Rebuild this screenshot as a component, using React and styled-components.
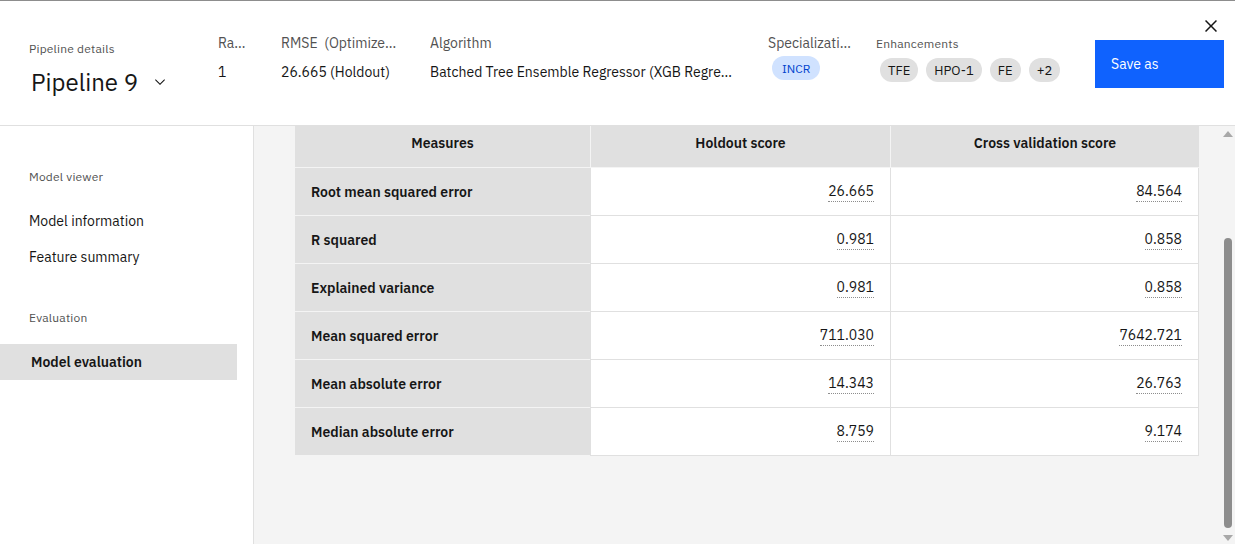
import React from "react";
import styled, { createGlobalStyle } from "styled-components";

const GlobalStyle = createGlobalStyle`
  html, body {
    margin: 0;
    padding: 0;
    background: #ffffff;
  }
  body {
    font-family: "IBM Plex Sans", Roboto, "Liberation Sans", sans-serif;
    color: #161616;
  }
  * { box-sizing: border-box; }
`;

const Page = styled.div`
  width: 1235px;
  height: 544px;
  display: flex;
  flex-direction: column;
  border-top: 1px solid #8d8d8d;
  overflow: hidden;
  position: relative;
`;

const Header = styled.header`
  height: 125px;
  flex-shrink: 0;
  display: flex;
  align-items: flex-start;
  padding-top: 33px;
  border-bottom: 1px solid #e0e0e0;
`;

const TitleBlock = styled.div`
  width: 189px;
  margin-left: 29px;
  margin-top: 7px;
  display: flex;
  flex-direction: column;
`;

const SmallLabel = styled.div`
  font-size: 12px;
  line-height: 16px;
  color: #525252;
  letter-spacing: 0.2px;
`;

const TitleRow = styled.div`
  display: flex;
  align-items: center;
  margin-top: 9px;
  font-size: 24px;
  line-height: 32px;
  color: #161616;
  gap: 14px;
  padding-left: 2px;
`;

const MetaColumn = styled.div`
  width: ${(p) => p.$w}px;
  display: flex;
  flex-direction: column;
  gap: 11px;
`;

const MetaLabel = styled.div`
  font-size: 14px;
  line-height: 18px;
  color: #525252;
  white-space: nowrap;
  overflow: hidden;
  text-overflow: ellipsis;
  max-width: ${(p) => p.$max}px;
`;

const MetaValue = styled.div`
  font-size: 14px;
  line-height: 18px;
  color: #161616;
  white-space: nowrap;
  overflow: hidden;
  text-overflow: ellipsis;
  max-width: ${(p) => p.$max}px;
`;

const Dotted = styled.span`
  border-bottom: 1px dotted #8d8d8d;
  padding-bottom: 1px;
`;

const TagColumn = styled.div`
  width: ${(p) => p.$w}px;
  display: flex;
  flex-direction: column;
  gap: ${(p) => p.$gap}px;
`;

const TagRow = styled.div`
  display: flex;
  gap: 8px;
  padding-left: 4px;
`;

const Tag = styled.span`
  height: 24px;
  border-radius: 12px;
  padding: 0 ${(p) => (p.$blue ? 10 : 8)}px;
  display: inline-flex;
  align-items: center;
  font-size: ${(p) => (p.$blue ? 12 : 13)}px;
  background: ${(p) => (p.$blue ? "#d0e2ff" : "#e0e0e0")};
  color: ${(p) => (p.$blue ? "#0043ce" : "#161616")};
`;

const SaveButton = styled.button`
  margin-top: 6px;
  width: 129px;
  height: 48px;
  background: #0f62fe;
  color: #ffffff;
  border: none;
  font-family: inherit;
  font-size: 14px;
  text-align: left;
  padding: 0 16px 1px;
`;

const CloseButton = styled.button`
  position: absolute;
  top: 13px;
  right: 12px;
  width: 24px;
  height: 24px;
  padding: 0;
  border: none;
  background: transparent;
  display: flex;
  align-items: center;
  justify-content: center;
`;

const Body = styled.div`
  flex: 1;
  display: flex;
  min-height: 0;
`;

const SideNav = styled.nav`
  width: 254px;
  flex-shrink: 0;
  border-right: 1px solid #e0e0e0;
  padding-top: 43px;
  display: flex;
  flex-direction: column;
`;

const NavSection = styled.div`
  display: flex;
  flex-direction: column;
  margin-bottom: 35px;
`;

const NavHeading = styled(SmallLabel)`
  padding-left: 29px;
  margin-bottom: 18px;
`;

const NavItem = styled.div`
  width: 237px;
  height: 36px;
  display: flex;
  align-items: center;
  padding-left: ${(p) => (p.$active ? 31 : 29)}px;
  font-size: 14px;
  font-weight: ${(p) => (p.$active ? 600 : 400)};
  background: ${(p) => (p.$active ? "#e0e0e0" : "transparent")};
  color: #161616;
`;

const Content = styled.main`
  flex: 1;
  background: #f4f4f4;
  padding-left: 41px;
`;

const Table = styled.div`
  width: 904px;
  display: grid;
  grid-template-columns: 295px 300px 309px;
`;

const HeadCell = styled.div`
  height: 42px;
  background: #e0e0e0;
  border-bottom: 1px solid #f4f4f4;
  border-left: ${(p) => (p.$first ? "none" : "1px solid #f4f4f4")};
  display: flex;
  align-items: center;
  justify-content: center;
  padding-bottom: 8px;
  font-size: 14px;
  font-weight: 600;
`;

const MeasureCell = styled.div`
  height: 48px;
  background: #e0e0e0;
  border-bottom: 1px solid #f4f4f4;
  display: flex;
  align-items: center;
  padding-left: 16px;
  font-size: 14px;
  font-weight: 600;
`;

const ValueCell = styled.div`
  height: 48px;
  background: #ffffff;
  border-bottom: 1px solid #e0e0e0;
  border-left: 1px solid #e0e0e0;
  border-right: ${(p) => (p.$last ? "1px solid #e0e0e0" : "none")};
  display: flex;
  align-items: center;
  justify-content: flex-end;
  padding-right: 16px;
  font-size: 14px;
  color: #161616;
`;

const Scrollbar = styled.div`
  width: 14px;
  flex-shrink: 0;
  background: #f4f4f4;
  display: flex;
  flex-direction: column;
  align-items: center;
  padding: 4px 0 2px;
`;

const Track = styled.div`
  flex: 1;
  width: 100%;
  display: flex;
  justify-content: center;
  padding: 100px 0 6px;
`;

const Thumb = styled.div`
  width: 8px;
  height: 100%;
  border-radius: 4px;
  background: #8d8d8d;
`;

const rows = [
  ["Root mean squared error", "26.665", "84.564"],
  ["R squared", "0.981", "0.858"],
  ["Explained variance", "0.981", "0.858"],
  ["Mean squared error", "711.030", "7642.721"],
  ["Mean absolute error", "14.343", "26.763"],
  ["Median absolute error", "8.759", "9.174"],
];

const Chevron = () => (
  <svg width="16" height="16" viewBox="0 0 16 16" fill="#161616">
    <path d="M8 11 3 6l.7-.7L8 9.6l4.3-4.3.7.7z" />
  </svg>
);

const CloseIcon = () => (
  <svg width="24" height="24" viewBox="0 0 32 32" fill="#161616">
    <path d="M24 9.4 22.6 8 16 14.6 9.4 8 8 9.4l6.6 6.6L8 22.6 9.4 24l6.6-6.6 6.6 6.6 1.4-1.4-6.6-6.6z" />
  </svg>
);

const Arrow = ({ down }) => (
  <svg width="10" height="8" viewBox="0 0 10 8" fill="#a8a8a8">
    <path d={down ? "M0 1h10L5 7z" : "M0 7h10L5 1z"} />
  </svg>
);

const App = () => {
  return (
    <Page>
      <GlobalStyle />
      <Header>
        <TitleBlock>
          <SmallLabel>Pipeline details</SmallLabel>
          <TitleRow>
            Pipeline 9
            <Chevron />
          </TitleRow>
        </TitleBlock>
        <MetaColumn $w={63}>
          <MetaLabel $max={29}>Rank</MetaLabel>
          <MetaValue>1</MetaValue>
        </MetaColumn>
        <MetaColumn $w={149}>
          <MetaLabel $max={116}>RMSE&nbsp;&nbsp;(Optimized)</MetaLabel>
          <MetaValue>
            <Dotted>26.665 (Holdout)</Dotted>
          </MetaValue>
        </MetaColumn>
        <MetaColumn $w={338}>
          <MetaLabel>Algorithm</MetaLabel>
          <MetaValue $max={304}>
            Batched Tree Ensemble Regressor (XGB Regressor)
          </MetaValue>
        </MetaColumn>
        <TagColumn $w={108} $gap={4}>
          <MetaLabel $max={86}>Specialization</MetaLabel>
          <TagRow>
            <Tag $blue>INCR</Tag>
          </TagRow>
        </TagColumn>
        <TagColumn $w={219} $gap={6}>
          <SmallLabel style={{ marginTop: 2 }}>Enhancements</SmallLabel>
          <TagRow>
            <Tag>TFE</Tag>
            <Tag>HPO-1</Tag>
            <Tag>FE</Tag>
            <Tag>+2</Tag>
          </TagRow>
        </TagColumn>
        <SaveButton>Save as</SaveButton>
      </Header>
      <CloseButton aria-label="Close">
        <CloseIcon />
      </CloseButton>
      <Body>
        <SideNav>
          <NavSection>
            <NavHeading>Model viewer</NavHeading>
            <NavItem>Model information</NavItem>
            <NavItem>Feature summary</NavItem>
          </NavSection>
          <NavSection>
            <NavHeading>Evaluation</NavHeading>
            <NavItem $active>Model evaluation</NavItem>
          </NavSection>
        </SideNav>
        <Content>
          <Table>
            <HeadCell $first>Measures</HeadCell>
            <HeadCell>Holdout score</HeadCell>
            <HeadCell>Cross validation score</HeadCell>
            {rows.map(([name, holdout, cv]) => (
              <React.Fragment key={name}>
                <MeasureCell>{name}</MeasureCell>
                <ValueCell>
                  <Dotted>{holdout}</Dotted>
                </ValueCell>
                <ValueCell $last>
                  <Dotted>{cv}</Dotted>
                </ValueCell>
              </React.Fragment>
            ))}
          </Table>
        </Content>
        <Scrollbar>
          <Arrow />
          <Track>
            <Thumb />
          </Track>
          <Arrow down />
        </Scrollbar>
      </Body>
    </Page>
  );
};

export default App;
